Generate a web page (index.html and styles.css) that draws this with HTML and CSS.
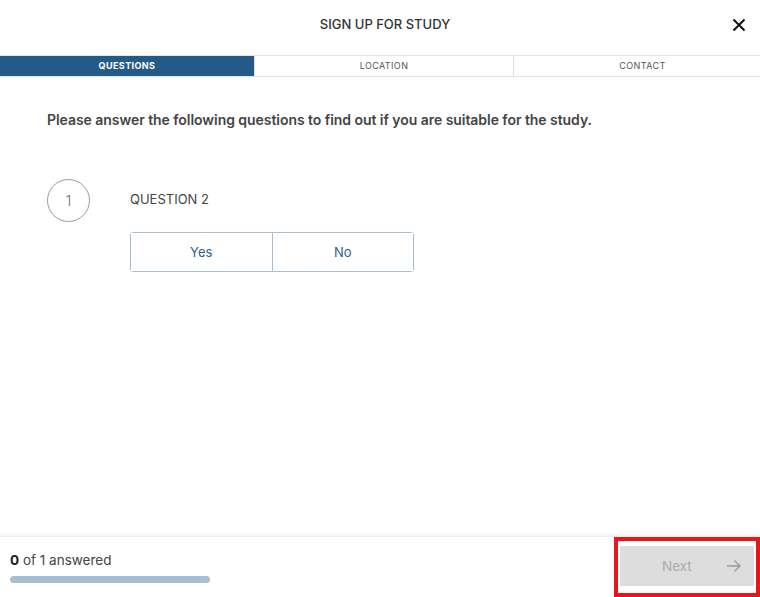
FILE: index.html
```html
<!DOCTYPE html>
<html>
<head>
    <meta charset="UTF-8">
    <title>Sign up for study</title>
    <link rel="stylesheet" href="styles.css">
</head>
<body>
    <div class="modal">
        <div class="header-container">
            <span></span>
            <h1>SIGN UP FOR STUDY</h1>
            <button class="close-btn" aria-label="Close">
                <svg width="14" height="14" viewBox="0 0 14 14">
                    <path d="M1.5 1.5 L12.5 12.5 M12.5 1.5 L1.5 12.5" stroke="#111" stroke-width="2" fill="none"/>
                </svg>
            </button>
        </div>
        <div class="tabs">
            <div class="tab active">QUESTIONS</div>
            <div class="tab">LOCATION</div>
            <div class="tab">CONTACT</div>
        </div>
        <div class="content">
            <p class="intro">Please answer the following questions to find out if you are suitable for the study.</p>
            <div class="question">
                <div class="question-number">1</div>
                <div class="question-body">
                    <div class="question-title">QUESTION 2</div>
                    <div class="answer-group">
                        <button class="answer-btn">Yes</button>
                        <button class="answer-btn">No</button>
                    </div>
                </div>
            </div>
        </div>
        <div class="footer">
            <div class="progress">
                <div class="progress-text"><b>0</b> of 1 answered</div>
                <div class="progress-bar"></div>
            </div>
            <div class="next-wrap">
                <button class="next-btn" disabled>
                    <span>Next</span>
                    <svg width="16" height="14" viewBox="0 0 16 14">
                        <path d="M1 7 H14 M8.5 1.5 L14 7 L8.5 12.5" stroke="#9a9a9a" stroke-width="1.4" fill="none"/>
                    </svg>
                </button>
            </div>
        </div>
    </div>
</body>
</html>
```

FILE: styles.css
```css
/* Base styles */
body {
    margin: 0;
    font-family: Inter, "Noto Sans", sans-serif;
    color: #333;
    background: white;
}

.modal {
    height: 597px;
    display: flex;
    flex-direction: column;
}

/* Header */
.header-container {
    height: 55px;
    display: grid;
    grid-template-columns: 1fr auto 1fr;
    align-items: center;
}

h1 {
    margin: 0 0 8px 10px;
    font-size: 13px;
    font-weight: 500;
    letter-spacing: 0;
    color: #333;
}

.close-btn {
    justify-self: end;
    margin: 0 14px 6px 0;
    padding: 0;
    border: none;
    background: none;
    width: 14px;
    height: 14px;
    cursor: pointer;
}

/* Tabs */
.tabs {
    display: flex;
    border-top: 1px solid #e4e4e4;
    border-bottom: 1px solid #e4e4e4;
}

.tab {
    height: 20px;
    line-height: 20px;
    text-align: center;
    font-size: 9px;
    letter-spacing: 0.4px;
    color: #555;
    border-left: 1px solid #e0e0e0;
}

.tab:nth-child(1) {
    width: 254px;
    border-left: none;
}

.tab:nth-child(2) {
    width: 258px;
}

.tab:nth-child(3) {
    flex: 1;
    padding-left: 11px;
}

.tab.active {
    background: #245a87;
    color: white;
    font-weight: 700;
}

/* Content */
.content {
    flex: 1;
    padding: 0 47px;
}

.intro {
    margin: 34px 0 0;
    font-size: 14px;
    font-weight: 600;
    letter-spacing: -0.05px;
    color: #444;
}

.question {
    display: flex;
    margin-top: 51px;
}

.question-number {
    width: 41px;
    height: 41px;
    border: 1px solid #9a9a9a;
    border-radius: 50%;
    display: flex;
    align-items: center;
    justify-content: center;
    font-size: 15px;
    color: #777;
    font-weight: 300;
}

.question-title {
    margin-top: 12px;
    font-size: 13px;
    color: #444;
}

.question-body {
    margin-left: 40px;
}

.answer-group {
    display: flex;
    margin-top: 25px;
    width: 282px;
    border: 1px solid #a8bdcf;
    border-radius: 3px;
}

.answer-btn {
    flex: 1;
    height: 38px;
    border: none;
    background: white;
    color: #2d5f8e;
    font-family: inherit;
    font-size: 13px;
    cursor: pointer;
}

.answer-btn + .answer-btn {
    border-left: 1px solid #a8bdcf;
}

/* Footer */
.footer {
    height: 60px;
    display: flex;
    justify-content: space-between;
    box-shadow: 0 -2px 4px rgba(0, 0, 0, 0.05);
    border-top: 1px solid #f0f0f0;
}

.progress {
    padding: 15px 10px 0;
}

.progress-text {
    font-size: 13.5px;
    color: #444;
}

.progress-text b {
    font-weight: 700;
    color: #222;
}

.progress-bar {
    width: 200px;
    height: 7px;
    margin-top: 8px;
    border-radius: 4px;
    background: #a5c0d5;
}

.next-wrap {
    box-sizing: border-box;
    width: 146px;
    border: 4px solid #e8151b;
    padding: 5px 2px 6px 2px;
}

.next-btn {
    width: 100%;
    height: 40px;
    border: none;
    background: #dddddd;
    display: flex;
    align-items: center;
    justify-content: space-between;
    padding: 0 12px 0 42px;
    font-family: inherit;
    font-size: 13.5px;
    color: #aaa;
}
```
